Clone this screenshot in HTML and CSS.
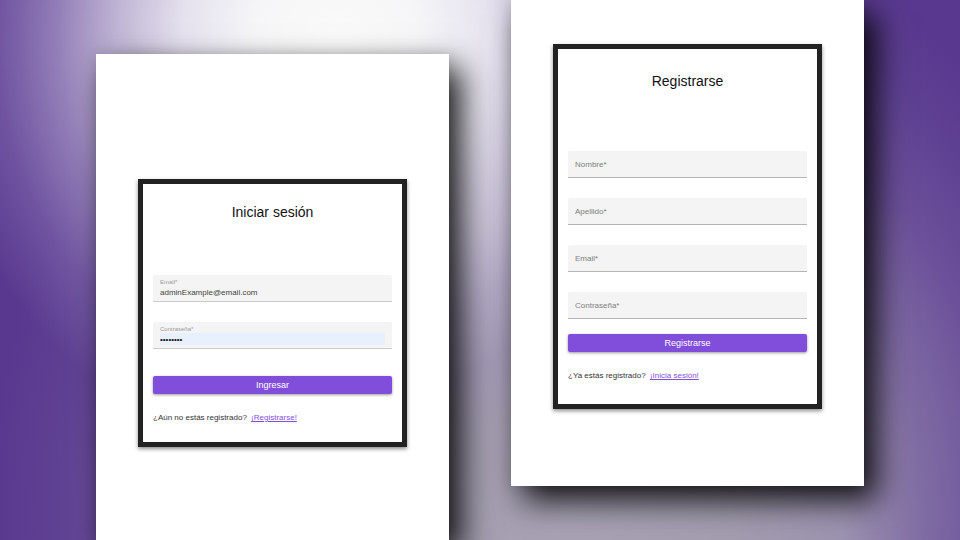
FILE: index.html
```html
<!DOCTYPE html>
<html lang="es">
<head>
<meta charset="utf-8">
<meta name="viewport" content="width=device-width, initial-scale=1">
<title>Acceso</title>
<link rel="stylesheet" href="styles.css">
</head>
<body>
<main class="stage">
  <section class="screen screen-login">
    <form class="card card-login">
      <h1 class="title">Iniciar sesión</h1>
      <div class="fields">
        <div class="field filled">
          <label for="login-email">Email*</label>
          <input id="login-email" type="email" value="adminExample@email.com">
        </div>
        <div class="field filled">
          <label for="login-password">Contraseña*</label>
          <input id="login-password" class="autofilled" type="password" value="password">
        </div>
      </div>
      <button class="submit" type="submit">Ingresar</button>
      <p class="switch">¿Aún no estás registrado? <a href="#registro">¡Registrarse!</a></p>
    </form>
  </section>
  <section class="screen screen-register" id="registro">
    <form class="card card-register">
      <h1 class="title">Registrarse</h1>
      <div class="fields">
        <div class="field">
          <label for="nombre">Nombre*</label>
          <input id="nombre" type="text">
        </div>
        <div class="field">
          <label for="apellido">Apellido*</label>
          <input id="apellido" type="text">
        </div>
        <div class="field">
          <label for="email">Email*</label>
          <input id="email" type="email">
        </div>
        <div class="field">
          <label for="password">Contraseña*</label>
          <input id="password" type="password">
        </div>
      </div>
      <button class="submit" type="submit">Registrarse</button>
      <p class="switch">¿Ya estás registrado? <a href="#login-email">¡Inicia sesión!</a></p>
    </form>
  </section>
</main>
</body>
</html>
```
FILE: styles.css
```css
* {
  box-sizing: border-box;
}

body {
  margin: 0;
  font-family: "Liberation Sans", Arial, sans-serif;
  font-size: 8px;
  line-height: 10px;
  color: #333;
}

.stage {
  display: grid;
  grid-template-columns: 1fr 1fr;
  gap: 62px;
  min-height: 100vh;
  padding: 0 10%;
  overflow: hidden;
  background:
    radial-gradient(ellipse 42% 80% at 35% 7%, #fafafa 0%, #f6f6f8 20%, rgba(238, 236, 244, 0.94) 38%, rgba(222, 217, 233, 0.78) 54%, rgba(200, 190, 222, 0.5) 70%, rgba(170, 152, 206, 0.28) 84%, rgba(140, 118, 184, 0) 100%),
    radial-gradient(ellipse 60% 115% at 59% 95%, #a8a2b4 0%, #a39daf 28%, rgba(160, 152, 178, 0.95) 48%, rgba(148, 135, 174, 0.65) 62%, rgba(138, 118, 172, 0.38) 76%, rgba(120, 98, 164, 0.16) 90%, rgba(88, 58, 144, 0) 100%),
    #59398f;
}

.screen {
  padding: 0 42px;
  background: #fff;
  box-shadow: 12px 14px 30px rgba(0, 0, 0, 0.9), 0 0 12px rgba(0, 0, 0, 0.1);
}

.screen-login {
  margin-top: 54px;
  padding-top: 125px;
}

.screen-register {
  margin-bottom: 54px;
  padding-top: 44px;
}

.card {
  display: flex;
  flex-direction: column;
  border: 5px solid #222;
  box-shadow: 0 2px 4px rgba(0, 0, 0, 0.45);
}

.card-login {
  padding: 18px 10px 19px;
}

.card-register {
  padding: 22px 10px 23px;
}

.title {
  margin: 0;
  font-size: 14px;
  font-weight: 400;
  line-height: 20px;
  text-align: center;
  color: #111;
}

.fields {
  display: grid;
  gap: 20px;
}

.card-login .fields {
  margin: 53px 0 27px;
}

.card-register .fields {
  margin: 60px 0 15px;
}

.field {
  display: grid;
  height: 27px;
  padding: 2px 7px 0;
  align-items: center;
  background: #f4f4f4;
  border-bottom: 1px solid #b4b4b4;
  border-radius: 2px 2px 0 0;
}

.field label,
.field input {
  grid-area: 1 / 1;
}

.field label {
  color: #808080;
  pointer-events: none;
}

.field input {
  width: 100%;
  height: 12px;
  padding: 0;
  border: 0;
  outline: 0;
  background: transparent;
  font: inherit;
  color: #444;
}

.filled {
  padding-top: 3px;
  grid-template-rows: 8px 12px;
  align-content: start;
  border-bottom-color: #ccc;
}

.filled label {
  font-size: 6px;
  line-height: 8px;
  color: #999;
}

.filled input {
  grid-area: 2 / 1;
}

.field .autofilled {
  background: #e8f0fe;
  color: #111;
}

.submit {
  height: 18px;
  padding: 0;
  border: 0;
  border-radius: 2px;
  background: #814edb;
  box-shadow: 0 1px 3px rgba(0, 0, 0, 0.4);
  font: inherit;
  font-size: 9px;
  color: #fff;
}

.switch {
  margin: 19px 0 0;
}

.switch a {
  margin-left: 2px;
  color: #814edb;
}
```
